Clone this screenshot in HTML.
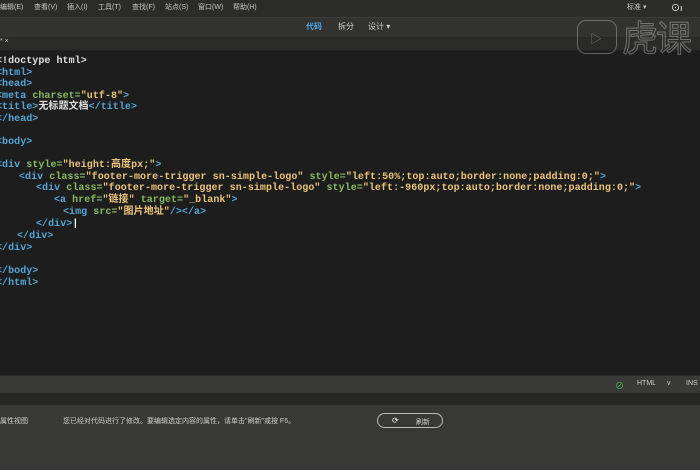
<!DOCTYPE html>
<html><head><meta charset="utf-8"><style>
*{margin:0;padding:0;box-sizing:border-box}
body{width:700px;height:470px;overflow:hidden;background:#1c1d1c;font-family:"Liberation Sans","Noto Sans CJK SC",sans-serif;position:relative}
.abs{position:absolute}
#menu{left:0;top:0;width:700px;height:17px;background:#2b2b2a;color:#c8c8c8;font-size:7px;line-height:16px}
#tool{left:0;top:17px;width:700px;height:20px;background:#323231;border-top:1px solid #3c3c3b}
#tab{left:0;top:37px;width:700px;height:14px;background:#2a2a29;border-bottom:1px solid #222}
#code{left:0;top:51px;width:700px;height:324px;background:#1c1d1c}
.ln{position:absolute;left:-4px;font-family:"Liberation Mono","Noto Sans CJK SC",monospace;font-size:10px;line-height:12px;color:#e0e0e0;white-space:pre;font-weight:bold;letter-spacing:0.05px}
.t{color:#55a6d8}.a{color:#86bb62}.s{color:#ecc47c}
#status{left:0;top:375px;width:700px;height:18px;background:#393938;border-top:1px solid #2a2a2a}
#strip{left:0;top:393px;width:700px;height:12px;background:#262625}
#props{left:0;top:405px;width:700px;height:65px;background:#383837;color:#cfcfcf;font-size:7px}
</style></head><body>
<div id="menu" class="abs">
<span class="abs" style="left:0">编辑(E)</span><span class="abs" style="left:34px">查看(V)</span><span class="abs" style="left:67px">插入(I)</span><span class="abs" style="left:98px">工具(T)</span><span class="abs" style="left:132px">查找(F)</span><span class="abs" style="left:165px">站点(S)</span><span class="abs" style="left:198px">窗口(W)</span><span class="abs" style="left:233px">帮助(H)</span>
<span class="abs" style="left:627px">标准 ▾</span><span class="abs" style="left:671px;color:#fff;font-size:9px">⊙ı</span>
</div>
<div id="tool" class="abs">
<span class="abs" style="left:306px;top:3px;color:#4ea8e8;font-size:8px;font-weight:bold">代码</span>
<span class="abs" style="left:338px;top:3px;color:#d0d0d0;font-size:8px">拆分</span>
<span class="abs" style="left:368px;top:3px;color:#d0d0d0;font-size:8px">设计 ▾</span>
</div>
<div id="tab" class="abs"><span class="abs" style="left:0;top:1px;color:#ccc;font-size:7px">* ×</span></div>
<div id="code" class="abs">
<div class="ln" style="top:5px">&lt;!doctype html&gt;</div>
<div class="ln t" style="top:17px">&lt;html&gt;</div>
<div class="ln t" style="top:28px">&lt;head&gt;</div>
<div class="ln" style="top:40px"><span class="t">&lt;meta</span> <span class="a">charset=</span><span class="s">"utf-8"</span><span class="t">&gt;</span></div>
<div class="ln" style="top:51px"><span class="t">&lt;title&gt;</span>无标题文档<span class="t">&lt;/title&gt;</span></div>
<div class="ln t" style="top:63px">&lt;/head&gt;</div>
<div class="ln t" style="top:86px">&lt;body&gt;</div>
<div class="ln" style="top:109px"><span class="t">&lt;div</span> <span class="a">style=</span><span class="s">"height:高度px;"</span><span class="t">&gt;</span></div>
<div class="ln" style="top:121px;left:19px"><span class="t">&lt;div</span> <span class="a">class=</span><span class="s">"footer-more-trigger sn-simple-logo"</span> <span class="a">style=</span><span class="s">"left:50%;top:auto;border:none;padding:0;"</span><span class="t">&gt;</span></div>
<div class="ln" style="top:132px;left:36px"><span class="t">&lt;div</span> <span class="a">class=</span><span class="s">"footer-more-trigger sn-simple-logo"</span> <span class="a">style=</span><span class="s">"left:-960px;top:auto;border:none;padding:0;"</span><span class="t">&gt;</span></div>
<div class="ln" style="top:144px;left:54px"><span class="t">&lt;a</span> <span class="a">href=</span><span class="s">"链接"</span> <span class="a">target=</span><span class="s">"_blank"</span><span class="t">&gt;</span></div>
<div class="ln" style="top:156px;left:63px"><span class="t">&lt;img</span> <span class="a">src=</span><span class="s">"图片地址"</span><span class="t">/&gt;&lt;/a&gt;</span></div>
<div class="ln t" style="top:168px;left:36px">&lt;/div&gt;<span style="color:#fff">|</span></div>
<div class="ln t" style="top:180px;left:17px">&lt;/div&gt;</div>
<div class="ln t" style="top:192px">&lt;/div&gt;</div>
<div class="ln t" style="top:215px">&lt;/body&gt;</div>
<div class="ln t" style="top:227px">&lt;/html&gt;</div>
</div>
<div class="abs" style="left:577px;top:20px;width:40px;height:34px;border:1.5px solid rgba(200,200,200,.4);border-radius:9px"></div>
<div class="abs" style="left:590px;top:30px;color:rgba(200,200,200,.45);font-size:12px">▷</div>
<div class="abs" style="left:622px;top:16px;font-size:36px;line-height:40px;color:transparent;-webkit-text-stroke:1px rgba(200,200,200,.45);font-family:'Noto Sans CJK SC',sans-serif;letter-spacing:-2px">虎课</div>
<div id="status" class="abs">
<span class="abs" style="left:615px;top:3px;color:#4fbf4f;font-size:9px">⊘</span>
<span class="abs" style="left:637px;top:4px;color:#ccc;font-size:7px">HTML</span>
<span class="abs" style="left:667px;top:4px;color:#ccc;font-size:7px">v</span>
<span class="abs" style="left:686px;top:4px;color:#ccc;font-size:7px">INS</span>
</div>
<div id="strip" class="abs"></div>
<div id="props" class="abs">
<span class="abs" style="left:0;top:11px">属性视图</span>
<span class="abs" style="left:63px;top:11px">您已经对代码进行了修改。要编辑选定内容的属性，请单击"刷新"或按 F5。</span>
<div class="abs" style="left:377px;top:8px;width:66px;height:15px;border:1.5px solid #bbb;border-radius:8px"><span class="abs" style="left:14px;top:2px;font-size:8px;color:#fff">⟳</span><span class="abs" style="left:38px;top:3px">刷新</span></div>
</div>
</body></html>
